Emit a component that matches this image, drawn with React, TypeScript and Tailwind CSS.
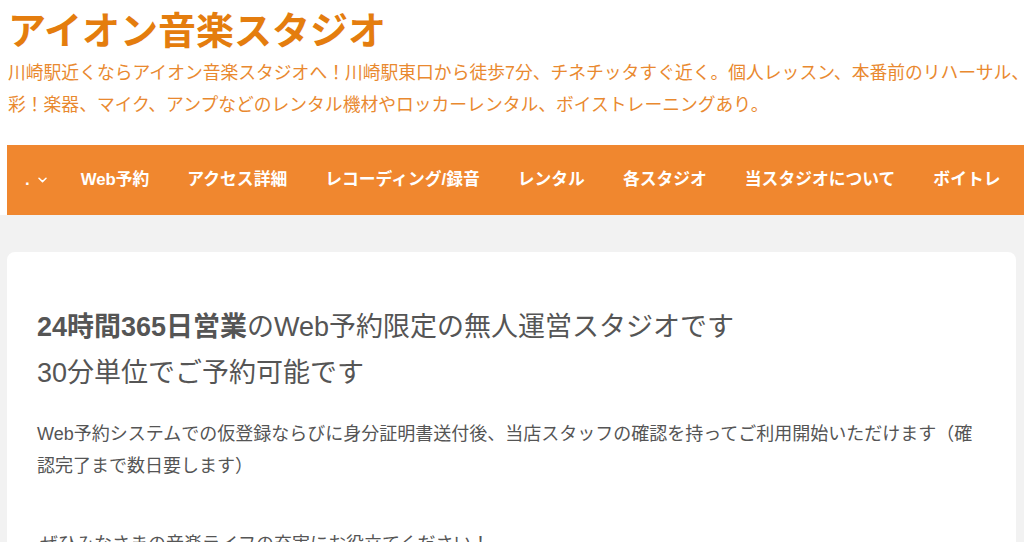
import React from 'react';

const navItems = ['Web予約', 'アクセス詳細', 'レコーディング/録音', 'レンタル', '各スタジオ', '当スタジオについて', 'ボイトレ'];

function Chevron() {
  return (
    <svg width="9" height="6" viewBox="0 0 9 6" fill="none" className="ml-[8px]">
      <path d="M1 1.2 4.5 4.6 8 1.2" stroke="#fff" strokeWidth="1.5" strokeLinecap="round" strokeLinejoin="round" />
    </svg>
  );
}

export default function App() {
  return (
    <div
      className="h-[542px] overflow-hidden bg-white"
      style={{ fontFamily: '"Liberation Sans", "Noto Sans CJK JP", sans-serif' }}
    >
      {/* site header */}
      <header className="px-[8px] pt-[7px]">
        <h1 className="text-[38px] leading-[48px] font-bold text-[#e47d0e] whitespace-nowrap">アイオン音楽スタジオ</h1>
        <div className="mt-[2px] text-[17.8px] leading-[32px] text-[#e9892f] whitespace-nowrap">
          <div>川崎駅近くならアイオン音楽スタジオへ！川崎駅東口から徒歩7分、チネチッタすぐ近く。個人レッスン、本番前のリハーサル、バンド練習など用途も多</div>
          <div>彩！楽器、マイク、アンプなどのレンタル機材やロッカーレンタル、ボイストレーニングあり。</div>
        </div>
      </header>

      {/* global nav */}
      <nav className="mt-[24px] ml-[7px] h-[70px] bg-[#f0872f] flex items-center pl-[18px] gap-[38px] text-white text-[16.8px] font-semibold whitespace-nowrap">
        <div className="flex items-center -mr-[4px]">
          <span>.</span>
          <Chevron />
        </div>
        {navItems.map((item) => (
          <span key={item}>{item}</span>
        ))}
      </nav>

      {/* main */}
      <main className="bg-[#f2f2f2] pt-[37px] pl-[7px] pr-[8px]">
        <div className="bg-white rounded-[8px] pl-[30px] pr-[30px] pt-[52px] pb-[40px] text-[#555]">
          <h2 className="text-[27px] leading-[46px] font-normal">
            <div>
              <span className="font-bold">24時間365日営業</span>のWeb予約限定の無人運営スタジオです
            </div>
            <div>30分単位でご予約可能です</div>
          </h2>
          <p className="mt-[22px] text-[18px] leading-[32px]">
            Web予約システムでの仮登録ならびに身分証明書送付後、当店スタッフの確認を持ってご利用開始いただけます（確
            <br />
            認完了まで数日要します）
          </p>
          <p className="mt-[46px] text-[18px] leading-[32px] pl-[3px]">ぜひみなさまの音楽ライフの充実にお役立てください！</p>
        </div>
      </main>
    </div>
  );
}
